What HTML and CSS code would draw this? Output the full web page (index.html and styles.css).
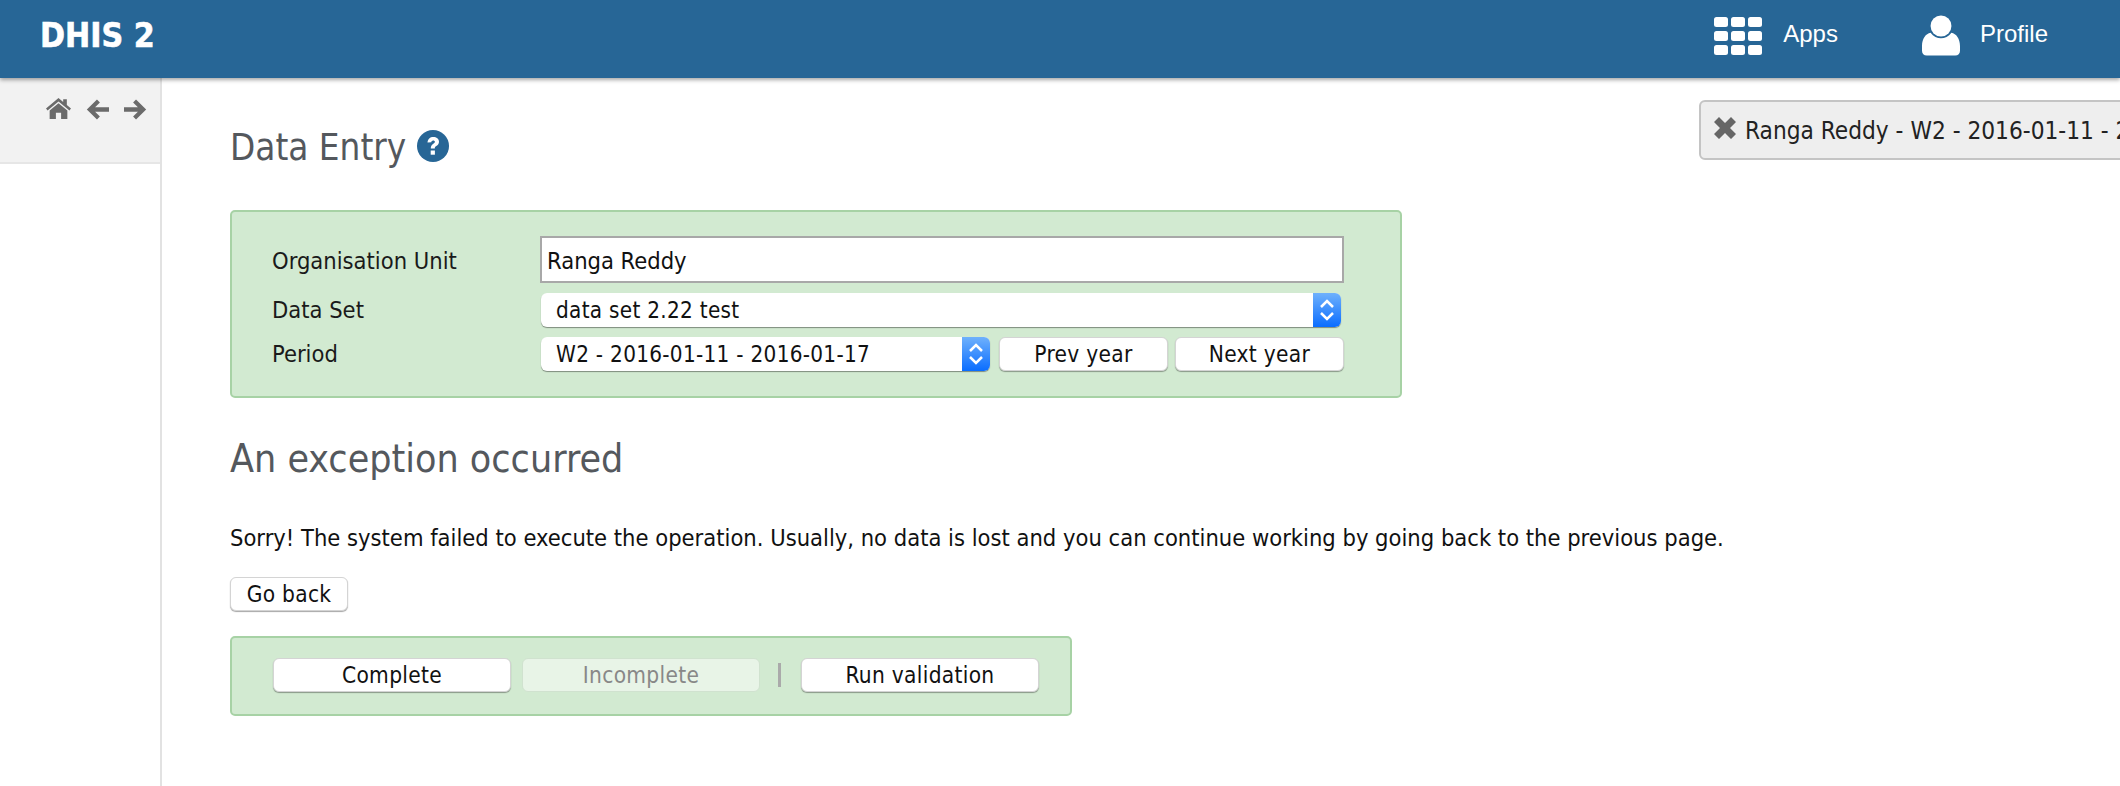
FILE: index.html
```html
<!DOCTYPE html>
<html lang="en">
<head>
    <meta charset="UTF-8">
    <title>Data Entry</title>
    <link rel="stylesheet" href="styles.css">
</head>
<body>
    <header class="topbar">
        <a class="brand">DHIS 2</a>
        <nav class="topnav">
            <a class="topnav__item topnav__item--apps">
                <svg class="icon-apps" width="50" height="40" viewBox="0 0 50 40" fill="#fff">
                    <rect x="1" y="1" width="14" height="10" rx="2.5"/><rect x="18" y="1" width="14" height="10" rx="2.5"/><rect x="35" y="1" width="14" height="10" rx="2.5"/>
                    <rect x="1" y="15" width="14" height="10" rx="2.5"/><rect x="18" y="15" width="14" height="10" rx="2.5"/><rect x="35" y="15" width="14" height="10" rx="2.5"/>
                    <rect x="1" y="29" width="14" height="10" rx="2.5"/><rect x="18" y="29" width="14" height="10" rx="2.5"/><rect x="35" y="29" width="14" height="10" rx="2.5"/>
                </svg>
                <span class="topnav__label">Apps</span>
            </a>
            <a class="topnav__item">
                <svg width="38" height="41" viewBox="0 0 40 42" fill="#fff">
                    <circle cx="20" cy="11" r="11"/>
                    <path d="M9 18c3 4 7 6 11 6s8-2 11-6c5 1 9 6 9 14v5c0 3-2 5-5 5H5c-3 0-5-2-5-5v-5c0-8 4-13 9-14z"/>
                </svg>
                <span class="topnav__label">Profile</span>
            </a>
        </nav>
    </header>

    <div class="page">
        <aside class="sidebar">
            <div class="sidebar__tools">
                <svg width="25" height="21" viewBox="0 0 24 20" fill="#6b6b6b">
                    <path d="M12 0 0 10l1.5 1.8L12 3.2l10.500 8.600L24 10l-4-3.300V1h-3.500v2.800z"/>
                    <path d="M12 5 3.500 12v8H9.500v-6h5v6h6v-8z"/>
                </svg>
                <svg width="23" height="23" viewBox="0 0 22 22" fill="#6b6b6b">
                    <path d="M10.500 1.500 0.800 11l9.700 9.500 2.800-2.800-4.600-4.500H22V8.800H8.700l4.600-4.500z"/>
                </svg>
                <svg width="23" height="23" viewBox="0 0 22 22" fill="#6b6b6b">
                    <path d="M11.500 1.500 21.200 11l-9.700 9.500-2.800-2.800 4.600-4.500H0V8.800h13.300L8.700 4.300z"/>
                </svg>
            </div>
        </aside>

        <main class="content">
            <h1 class="page-title">
                Data Entry
                <svg class="help" width="32" height="32" viewBox="0 0 32 32">
                    <circle cx="16" cy="16" r="16" fill="#276696"/>
                    <path d="M10.500 12.500c.3-3.500 2.500-5.500 5.800-5.500 3.200 0 5.700 2 5.700 4.800 0 2-1 3.200-2.700 4.300-1.200.8-1.500 1.300-1.500 2.400h-4c0-2.300.7-3.500 2.500-4.700 1.100-.8 1.600-1.200 1.600-2 0-.8-.7-1.400-1.700-1.400-1.100 0-1.800.7-1.900 1.900z" fill="#fff"/>
                    <rect x="13.700" y="20.500" width="4.200" height="4.200" fill="#fff"/>
                </svg>
            </h1>

            <form class="panel panel--selection">
                <div class="form-row form-row--first">
                    <label class="form-row__label">Organisation Unit</label>
                    <input class="org-input" type="text" value="Ranga Reddy">
                </div>
                <div class="form-row">
                    <label class="form-row__label">Data Set</label>
                    <div class="select select--wide">
                        <select><option>data set 2.22 test</option></select>
                        <svg class="select__arrow" width="28" height="34" viewBox="0 0 28 34" fill="none" stroke="#fff" stroke-width="2.500">
                            <path d="M8 14l6-6 6 6M8 20l6 6 6-6"/>
                        </svg>
                    </div>
                </div>
                <div class="form-row">
                    <label class="form-row__label">Period</label>
                    <div class="select select--period">
                        <select><option>W2 - 2016-01-11 - 2016-01-17</option></select>
                        <svg class="select__arrow" width="28" height="34" viewBox="0 0 28 34" fill="none" stroke="#fff" stroke-width="2.500">
                            <path d="M8 14l6-6 6 6M8 20l6 6 6-6"/>
                        </svg>
                    </div>
                    <button type="button" class="btn btn--year btn--prev">Prev year</button>
                    <button type="button" class="btn btn--year">Next year</button>
                </div>
            </form>

            <h2 class="error-title">An exception occurred</h2>
            <p class="error-text">Sorry! The system failed to execute the operation. Usually, no data is lost and you can continue working by going back to the previous page.</p>
            <button type="button" class="btn btn--back">Go back</button>

            <div class="panel panel--actions">
                <button type="button" class="btn btn--action">Complete</button>
                <button type="button" class="btn btn--action btn--disabled">Incomplete</button>
                <span class="divider"></span>
                <button type="button" class="btn btn--action">Run validation</button>
            </div>
        </main>
    </div>

    <div class="notice">
        <svg class="notice__close" width="24" height="24" viewBox="0 0 24 24" fill="#666">
            <path d="M6 1 12 7l6-6 5 5-6 6 6 6-5 5-6-6-6 6-5-5 6-6-6-6z"/>
        </svg>
        <span class="notice__text">Ranga Reddy - W2 - 2016-01-11 - 2016-01-17</span>
    </div>
</body>
</html>
```

FILE: styles.css
```css
html, body {
    height: 100%;
}
body {
    margin: 0;
    overflow: hidden;
    background-color: #fff;
    font-family: "DejaVu Sans Condensed", "DejaVu Sans", sans-serif;
    font-size: 23.5px;
    color: #222;
}

/* top bar */
.topbar {
    height: 78px;
    box-sizing: border-box;
    display: flex;
    align-items: center;
    justify-content: space-between;
    padding: 0 72px 0 40px;
    background-color: #276696;
    box-shadow: 0 2px 4px rgba(0, 0, 0, 0.35);
    position: relative;
}
.brand {
    color: #fff;
    font-size: 33.5px;
    font-weight: bold;
    margin-top: -8px;
    -webkit-text-stroke: 0.6px #fff;
}
.topnav {
    display: flex;
    gap: 84px;
    margin-top: -7px;
}
.topnav__item {
    display: flex;
    align-items: center;
    gap: 20px;
    color: #fff;
    font-family: "Liberation Sans", sans-serif;
    font-size: 24px;
}
.topnav__label {
    margin-top: -4px;
}

/* page */
.page {
    display: flex;
    height: calc(100% - 78px);
}
.sidebar {
    width: 160px;
    flex-shrink: 0;
    border-right: 2px solid #e2e2e2;
}
.sidebar__tools {
    height: 86px;
    box-sizing: border-box;
    display: flex;
    justify-content: flex-end;
    align-items: flex-start;
    gap: 15px;
    padding: 20px 13px 0 0;
    background-color: #f2f2f2;
    border-bottom: 2px solid #e6e6e6;
}
.content {
    flex: 1;
    padding: 0 0 0 68px;
}
.page-title {
    display: flex;
    align-items: center;
    gap: 11px;
    margin: 50px 0 0;
    height: 38px;
    font-size: 36.5px;
    font-weight: normal;
    color: #54585d;
}
.help {
    margin-top: -2px;
}

/* green panels */
.panel {
    box-sizing: border-box;
    background-color: #d2ead1;
    border: 2px solid #a7d2a5;
    border-radius: 5px;
}
.panel--selection {
    width: 1172px;
    height: 188px;
    margin-top: 44px;
    padding: 24px 0 0 40px;
}
.form-row {
    display: flex;
    align-items: center;
    margin-top: 10px;
    height: 34px;
}
.form-row--first {
    margin-top: 0;
    height: 47px;
}
.form-row__label {
    width: 268px;
    flex-shrink: 0;
    color: #1a1a1a;
}
.form-row--first .form-row__label {
    margin-top: 2px;
}
.org-input {
    box-sizing: border-box;
    width: 804px;
    height: 47px;
    padding: 2px 6px 0 5px;
    border: 2px solid #a8a8a8;
    background-color: #fff;
    font-family: inherit;
    font-size: 23.5px;
    color: #111;
    outline: none;
}

/* selects */
.select {
    position: relative;
    height: 34px;
    margin-left: 1px;
}
.select select {
    appearance: none;
    box-sizing: border-box;
    width: 100%;
    height: 34px;
    padding: 0 0 0 15px;
    border: 0;
    border-radius: 6px;
    background-color: #fff;
    box-shadow: 0 1px 1px rgba(0, 0, 0, 0.4);
    font-family: inherit;
    font-size: 22.3px;
    color: #111;
    letter-spacing: 0.3px;
}
.select__arrow {
    position: absolute;
    top: 0;
    right: 0;
    border-radius: 0 6px 6px 0;
    background: linear-gradient(#6fb1fc, #0a6dff);
}
.select--wide {
    width: 800px;
}
.select--period {
    width: 449px;
}

/* buttons */
.btn {
    box-sizing: border-box;
    height: 34px;
    padding: 0;
    border: 1px solid #d4d4d4;
    border-radius: 6px;
    background-color: #fff;
    box-shadow: 0 1px 1px rgba(0, 0, 0, 0.35);
    font-family: inherit;
    font-size: 22.5px;
    color: #111;
    letter-spacing: 0.3px;
}
.btn--year {
    width: 169px;
    margin-left: 9px;
}
.btn--year + .btn--year {
    margin-left: 7px;
}
.btn--back {
    display: block;
    width: 118px;
    margin-top: 24px;
}
.btn--action {
    width: 238px;
}
.btn--disabled {
    background-color: #e8f4e7;
    color: #888;
    border-color: #d0e2cf;
    box-shadow: none;
}

/* exception text */
.error-title {
    margin: 38px 0 0;
    font-size: 39px;
    line-height: 46px;
    font-weight: normal;
    color: #54585d;
}
.error-text {
    margin: 41px 0 0;
    line-height: 30px;
    color: #111;
    white-space: nowrap;
}

/* actions */
.panel--actions {
    display: flex;
    align-items: center;
    width: 842px;
    height: 80px;
    margin-top: 25px;
    padding: 0 0 2px 41px;
}
.btn--action + .btn--action {
    margin-left: 11px;
}
.divider {
    width: 3px;
    height: 24px;
    margin: 0 20px 0 18px;
    background-color: #aaa;
}

/* message on the right */
.notice {
    position: absolute;
    top: 100px;
    left: 1699px;
    width: 500px;
    height: 60px;
    box-sizing: border-box;
    display: flex;
    align-items: center;
    gap: 8px;
    padding: 0 0 0 12px;
    background-color: #eee;
    border: 2px solid #c4c4c4;
    border-radius: 6px;
    white-space: nowrap;
    font-size: 24.2px;
    color: #222;
}
.notice__close {
    flex-shrink: 0;
    margin-top: -5px;
}
.notice__text {
    margin-top: 2px;
}
```
